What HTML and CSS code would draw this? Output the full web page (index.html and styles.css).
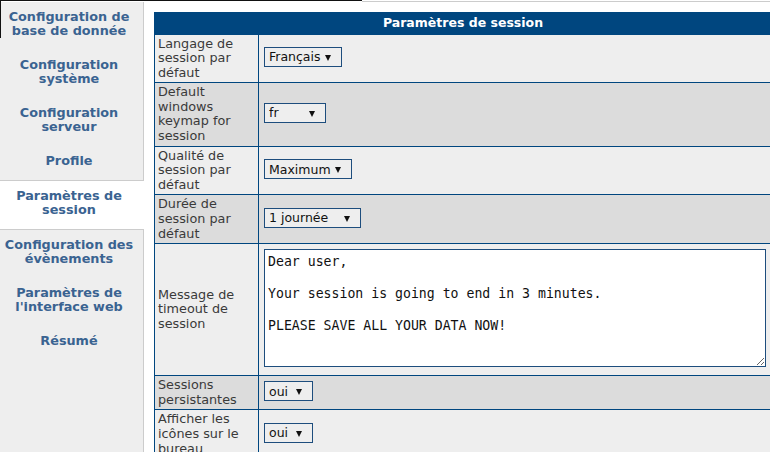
FILE: index.html
```html
<!DOCTYPE html>
<html lang="fr">
<head>
    <meta charset="UTF-8">
    <meta name="viewport" content="width=device-width, initial-scale=1.0">
    <title>Paramètres de session</title>
    <link rel="stylesheet" href="styles.css">
</head>
<body>
    <div class="topbar">
        <div class="topbar-dark"></div>
        <div class="topbar-rest"></div>
    </div>
    <div class="page">
        <div class="sidebar">
            <a class="tab" href="#">Configuration de base de donnée</a>
            <a class="tab" href="#">Configuration système</a>
            <a class="tab" href="#">Configuration serveur</a>
            <a class="tab" href="#">Profile</a>
            <a class="tab active" href="#">Paramètres de session</a>
            <a class="tab" href="#">Configuration des évènements</a>
            <a class="tab" href="#">Paramètres de l'interface web</a>
            <a class="tab" href="#">Résumé</a>
        </div>

        <div class="content">
            <table class="settings">
                <thead>
                    <tr><th colspan="2">Paramètres de session</th></tr>
                </thead>
                <tbody>
                    <tr>
                        <td class="label">Langage de session par défaut</td>
                        <td class="value">
                            <span class="select">
                                <select class="sel-lang">
                                    <option>Français</option>
                                    <option>English</option>
                                </select>
                            </span>
                        </td>
                    </tr>
                    <tr>
                        <td class="label">Default windows keymap for session</td>
                        <td class="value">
                            <span class="select">
                                <select class="sel-keymap">
                                    <option>fr</option>
                                    <option>en-us</option>
                                </select>
                            </span>
                        </td>
                    </tr>
                    <tr>
                        <td class="label">Qualité de session par défaut</td>
                        <td class="value">
                            <span class="select">
                                <select class="sel-quality">
                                    <option>Maximum</option>
                                    <option>Moyenne</option>
                                </select>
                            </span>
                        </td>
                    </tr>
                    <tr>
                        <td class="label">Durée de session par défaut</td>
                        <td class="value">
                            <span class="select">
                                <select class="sel-duration">
                                    <option>1 journée</option>
                                    <option>1 heure</option>
                                </select>
                            </span>
                        </td>
                    </tr>
                    <tr>
                        <td class="label">Message de timeout de session</td>
                        <td class="value">
                            <textarea class="message">Dear user,

Your session is going to end in 3 minutes.

PLEASE SAVE ALL YOUR DATA NOW!</textarea>
                        </td>
                    </tr>
                    <tr>
                        <td class="label">Sessions persistantes</td>
                        <td class="value">
                            <span class="select">
                                <select class="sel-bool">
                                    <option>oui</option>
                                    <option>non</option>
                                </select>
                            </span>
                        </td>
                    </tr>
                    <tr>
                        <td class="label">Afficher les icônes sur le bureau</td>
                        <td class="value">
                            <span class="select">
                                <select class="sel-bool">
                                    <option>oui</option>
                                    <option>non</option>
                                </select>
                            </span>
                        </td>
                    </tr>
                </tbody>
            </table>
        </div>
    </div>
</body>
</html>
```

FILE: styles.css
```css
body {
    margin: 0;
    font-family: 'DejaVu Sans', Verdana, sans-serif;
    background-color: #fff;
    color: #333;
    overflow: hidden;
}

/* thin frame line along the top */
.topbar {
    display: flex;
    height: 2px;
}

.topbar-dark {
    width: 362px;
    height: 1px;
    background-color: #111;
}

.topbar-rest {
    flex: 1;
    border-bottom: 1px solid #ccc;
}

.page {
    display: flex;
    align-items: stretch;
    min-height: 460px;
}

/* Left menu */
.sidebar {
    position: relative;
    width: 143px;
    flex-shrink: 0;
    background-color: #eee;
    border-right: 1px solid #ccc;
}

.sidebar::before {
    content: "";
    position: absolute;
    left: 0;
    top: -2px;
    width: 1px;
    height: 38px;
    background-color: #111;
}

.tab {
    display: block;
    padding: 8px 6px 12px 1px;
    font-size: 12.8px;
    font-weight: bold;
    line-height: 14px;
    text-align: center;
    color: #3a6391;
    text-decoration: none;
}

.tab.active {
    background-color: #fff;
    border-top: 1px solid #ccc;
    border-bottom: 1px solid #ccc;
    margin-right: -1px;
    padding-right: 7px;
}

/* Main area */
.content {
    padding: 10px 0 0 10px;
}

.settings {
    width: 618px;
    border-collapse: collapse;
    font-size: 12.8px;
    line-height: 14.6px;
}

.settings th {
    background-color: #00467f;
    color: #fff;
    font-weight: bold;
    font-size: 12.5px;
    line-height: 14.5px;
    padding: 3px;
    border: 1px solid #00467f;
}

.settings td {
    border: 1px solid #00467f;
    vertical-align: middle;
}

.settings tbody tr:nth-child(odd) {
    background-color: #eee;
}

.settings tbody tr:nth-child(even) {
    background-color: #dcdcdc;
}

.settings .label {
    width: 97px;
    padding: 2px 3px;
    color: #3a3a3a;
}

.settings .value {
    padding: 5px 5px 8px 5px;
}

/* Drop-downs */
.select {
    position: relative;
    display: inline-block;
    vertical-align: middle;
}

.select::after {
    content: "";
    position: absolute;
    right: 11px;
    top: 8px;
    border-left: 3px solid transparent;
    border-right: 3px solid transparent;
    border-top: 6px solid #111;
    pointer-events: none;
}

.select select {
    appearance: none;
    -webkit-appearance: none;
    display: block;
    height: 20px;
    margin: 0;
    padding: 0 4px;
    border: 1px solid #1d4d7d;
    border-radius: 0;
    background-color: #eee;
    font-family: 'DejaVu Sans', Verdana, sans-serif;
    font-size: 12.5px;
    color: #111;
}

.sel-lang { width: 78px; }
.sel-keymap { width: 62px; }
.sel-quality { width: 88px; }
.sel-duration { width: 97px; }
.sel-bool { width: 49px; }

.message {
    display: block;
    box-sizing: border-box;
    width: 502px;
    height: 118px;
    margin: 0;
    padding: 4px 3px 1px 3px;
    border: 1px solid #1d4d7d;
    background-color: #fff;
    font-family: 'DejaVu Sans Mono', 'Liberation Mono', monospace;
    font-size: 13.2px;
    line-height: 16px;
    color: #111;
}
```
